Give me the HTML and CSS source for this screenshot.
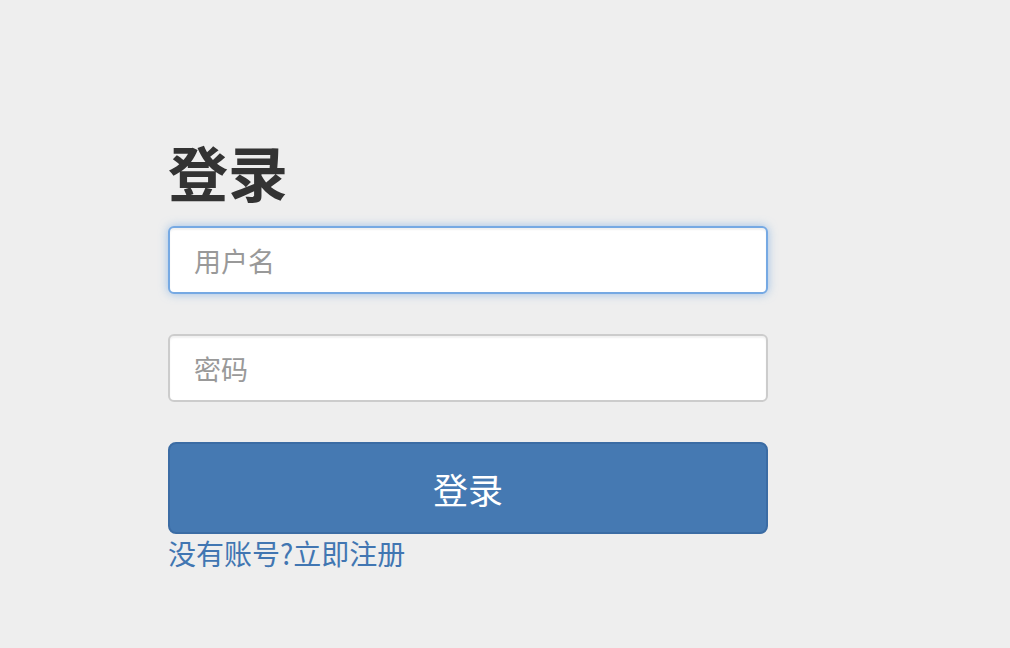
FILE: index.html
```html
<!DOCTYPE html>
<html lang="zh-CN">
<head>
<meta charset="utf-8">
<title>登录</title>
<link rel="stylesheet" href="styles.css">
</head>
<body>
<main class="page">
  <form class="login">
    <h1 class="title">登录</h1>
    <input class="field field-focus" type="text" placeholder="用户名">
    <input class="field" type="password" placeholder="密码">
    <button class="submit" type="button">登录</button>
    <a class="register" href="#">没有账号?立即注册</a>
  </form>
</main>
</body>
</html>
```
FILE: styles.css
```css
html, body {
  margin: 0;
  padding: 0;
  background: #eeeeee;
}
body {
  font-family: "Noto Sans CJK SC", "Noto Sans", sans-serif;
  color: #333333;
}
.page {
  padding: 141px 0 0 168px;
}
.login {
  display: flex;
  flex-direction: column;
  align-items: flex-start;
  width: 600px;
}
.title {
  margin: 0 0 25px 0;
  font-size: 60px;
  line-height: 60px;
  font-weight: 700;
  color: #333333;
}
.field {
  box-sizing: border-box;
  width: 600px;
  height: 68px;
  margin: 0 0 40px 0;
  padding: 0 24px;
  border: 2px solid #cccccc;
  border-radius: 6px;
  background: #ffffff;
  font-family: inherit;
  font-size: 27px;
  color: #555555;
  box-shadow: inset 0 2px 2px rgba(0, 0, 0, 0.06);
  outline: none;
}
.field::placeholder {
  color: #999999;
}
.field-focus {
  border-color: #76a9e3;
  box-shadow: inset 0 2px 2px rgba(0, 0, 0, 0.06), 0 0 10px rgba(102, 160, 225, 0.6);
}
.submit {
  box-sizing: border-box;
  width: 600px;
  height: 92px;
  margin: 0;
  padding: 0;
  border: 2px solid #3b6ca4;
  border-radius: 8px;
  background: #4579b2;
  color: #ffffff;
  font-family: inherit;
  font-size: 35px;
  cursor: pointer;
}
.register {
  font-size: 28px;
  line-height: 38px;
  color: #4176b2;
  text-decoration: none;
}
```
